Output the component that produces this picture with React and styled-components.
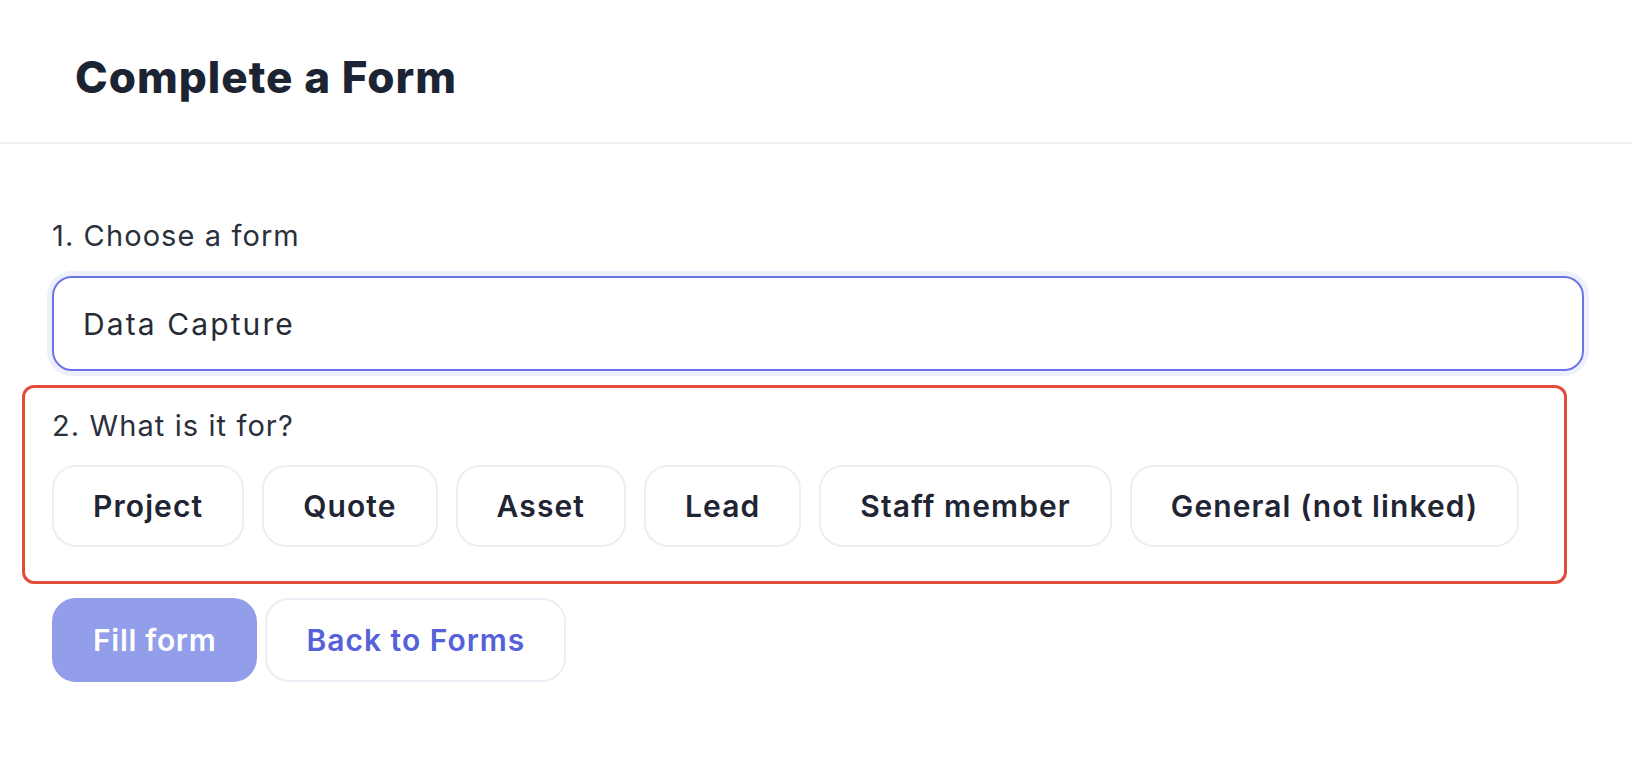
import React from "react";
import styled, { createGlobalStyle } from "styled-components";

const GlobalStyle = createGlobalStyle`
  html, body {
    margin: 0;
    padding: 0;
    background: #ffffff;
  }
  body {
    font-family: "Inter", "Noto Sans", sans-serif;
    color: #1e2533;
  }
  * {
    box-sizing: border-box;
  }
`;

const targets = [
  "Project",
  "Quote",
  "Asset",
  "Lead",
  "Staff member",
  "General (not linked)",
];

export default function App() {
  return (
    <Page>
      <GlobalStyle />
      <Header>
        <Title>Complete a Form</Title>
      </Header>
      <Body>
        <Label>1. Choose a form</Label>
        <Select>Data Capture</Select>
        <Highlight>
          <Label>2. What is it for?</Label>
          <ChipRow>
            {targets.map((t) => (
              <Chip key={t}>{t}</Chip>
            ))}
          </ChipRow>
        </Highlight>
        <Actions>
          <Button $primary>Fill form</Button>
          <Button>Back to Forms</Button>
        </Actions>
      </Body>
    </Page>
  );
}

const Page = styled.div`
  width: 100%;
  min-height: 762px;
  background: #ffffff;
`;

const Header = styled.header`
  height: 144px;
  padding: 55px 0 0 75px;
  border-bottom: 2px solid #eef0f5;
`;

const Title = styled.h1`
  margin: 0;
  font-size: 44px;
  line-height: 44px;
  font-weight: 800;
  letter-spacing: 1px;
  color: #1c2434;
`;

const Body = styled.main`
  padding: 77px 48px 0 52px;
  display: flex;
  flex-direction: column;
`;

const Label = styled.div`
  font-size: 29px;
  line-height: 29px;
  font-weight: 400;
  letter-spacing: 1.1px;
  color: #2a303c;
`;

const Select = styled.div`
  margin-top: 26px;
  height: 95px;
  display: flex;
  align-items: center;
  padding: 0 29px;
  border: 2px solid #6b74e6;
  border-radius: 20px;
  box-shadow: 0 0 0 5px #eef1fd;
  font-size: 30px;
  font-weight: 400;
  letter-spacing: 2.1px;
  color: #262b35;
`;

const Highlight = styled.section`
  margin: 14px 17px 0 -30px;
  padding: 23px 27px 34px;
  border: 3px solid #e24d3b;
  border-radius: 12px;
`;

const ChipRow = styled.div`
  margin-top: 25px;
  display: flex;
  gap: 18px;
`;

const Chip = styled.button`
  height: 82px;
  padding: 0 39px;
  border: 2px solid #eceef5;
  border-radius: 24px;
  background: #ffffff;
  font-family: "Inter", "Noto Sans", sans-serif;
  font-size: 30px;
  font-weight: 600;
  letter-spacing: 1.1px;
  color: #1f2533;
  cursor: pointer;
`;

const Actions = styled.div`
  margin-top: 14px;
  display: flex;
  gap: 8px;
`;

const Button = styled.button`
  height: 84px;
  padding: 0 39px;
  border-radius: 24px;
  border: 2px solid ${(p) => (p.$primary ? "#939eea" : "#eceef5")};
  background: ${(p) => (p.$primary ? "#939eea" : "#ffffff")};
  color: ${(p) => (p.$primary ? "#ffffff" : "#5560d9")};
  font-family: "Inter", "Noto Sans", sans-serif;
  font-size: 30px;
  font-weight: 600;
  letter-spacing: ${(p) => (p.$primary ? "0.7px" : "1px")};
  cursor: pointer;
`;
